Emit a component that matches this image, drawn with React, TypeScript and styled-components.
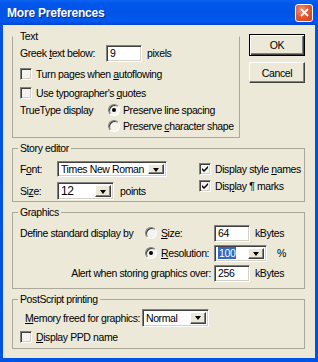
import styled, { createGlobalStyle } from "styled-components";

const GlobalStyle = createGlobalStyle`
  html, body {
    margin: 0;
    padding: 0;
    background: #ffffff;
  }
  body {
    font-family: "Liberation Sans", Arial, sans-serif;
    font-size: 10.5px;
    letter-spacing: -0.4px;
    color: #000000;
  }
`;

const Window = styled.div`
  width: 318px;
  height: 362px;
  display: flex;
  flex-direction: column;
  background: #0054e3;
  box-sizing: border-box;
`;

const TitleBar = styled.div`
  height: 25px;
  flex: none;
  display: flex;
  align-items: center;
  justify-content: space-between;
  padding: 0 5px 0 7px;
  box-sizing: border-box;
  background: linear-gradient(
    #0a62f0 0%,
    #0256ec 15%,
    #0055e5 50%,
    #0058ee 85%,
    #0046d0 100%
  );
`;

const Title = styled.span`
  color: #ffffff;
  font-weight: bold;
  font-size: 12px;
  letter-spacing: -0.2px;
  text-shadow: 1px 1px #0a2a8a;
`;

const CloseButton = styled.div`
  width: 18px;
  height: 18px;
  box-sizing: border-box;
  border: 1px solid #ffffff;
  border-radius: 3px;
  background: radial-gradient(circle at 35% 30%, #f3937a 0%, #e35a33 45%, #c9401b 100%);
  display: flex;
  align-items: center;
  justify-content: center;
`;

const Body = styled.div`
  flex: 1;
  margin: 0 3px 4px 3px;
  padding: 5px 10px 0 9px;
  background: #ece9d8;
  display: flex;
  flex-direction: column;
  gap: 4px;
`;

const TopSection = styled.div`
  display: flex;
  align-items: flex-start;
  gap: 9px;
`;

const Group = styled.fieldset<{ $width?: number; $openTop?: boolean }>`
  margin: 0;
  padding: 0 6px 0 7px;
  border: 1px solid #aca899;
  border-top-color: ${({ $openTop }) => ($openTop ? "transparent" : "#aca899")};
  min-width: 0;
  width: ${({ $width }) => ($width ? `${$width}px` : "auto")};
  box-sizing: border-box;
`;

const Legend = styled.legend`
  padding: 0 2px;
  margin-left: -2px;
  line-height: 12px;
`;

const Row = styled.div<{ $h: number; $indent?: number; $top?: number }>`
  height: ${({ $h }) => $h}px;
  display: flex;
  align-items: center;
  padding-left: ${({ $indent }) => $indent ?? 0}px;
  margin-top: ${({ $top }) => $top ?? 0}px;
  white-space: nowrap;
`;

const Text = styled.span`
  white-space: pre;
`;

const Label = styled.span<{ $w?: number }>`
  display: inline-block;
  width: ${({ $w }) => ($w ? `${$w}px` : "auto")};
  flex: none;
  white-space: pre;
`;

const U = styled.span`
  text-decoration: underline;
`;

const TextBox = styled.div<{ $w: number }>`
  width: ${({ $w }) => $w}px;
  height: 17px;
  box-sizing: border-box;
  border: 1px solid;
  border-color: #808080 #ffffff #ffffff #808080;
  box-shadow: inset 1px 1px #404040, inset -1px -1px #d4d0c8;
  background: #ffffff;
  display: flex;
  align-items: center;
  padding-left: 3px;
  flex: none;
`;

const Unit = styled.span<{ $gap: number }>`
  margin-left: ${({ $gap }) => $gap}px;
  white-space: pre;
`;

const Combo = styled.div<{ $w: number; $h?: number }>`
  width: ${({ $w }) => $w}px;
  height: ${({ $h }) => $h ?? 17}px;
  box-sizing: border-box;
  border: 1px solid;
  border-color: #808080 #ffffff #ffffff #808080;
  box-shadow: inset 1px 1px #404040, inset -1px -1px #d4d0c8;
  background: #ffffff;
  display: flex;
  align-items: stretch;
  padding: 2px;
  flex: none;
`;

const ComboText = styled.span<{ $big?: boolean }>`
  flex: 1;
  display: flex;
  align-items: center;
  padding-left: 1px;
  white-space: pre;
  font-size: ${({ $big }) => ($big ? "12px" : "10.5px")};
`;

const Highlight = styled.span`
  background: #316ac5;
  color: #ffffff;
  padding: 0 1px;
  line-height: 12px;
`;

const DropButton = styled.div`
  width: 16px;
  flex: none;
  box-sizing: border-box;
  background: #ece9d8;
  border: 1px solid;
  border-color: #ffffff #404040 #404040 #ffffff;
  box-shadow: inset -1px -1px #808080;
  display: flex;
  align-items: center;
  justify-content: center;
`;

const Arrow = styled.span`
  width: 0;
  height: 0;
  border-left: 3.5px solid transparent;
  border-right: 3.5px solid transparent;
  border-top: 4px solid #000000;
  margin-top: 1px;
`;

const Box = styled.span`
  width: 12px;
  height: 12px;
  flex: none;
  box-sizing: border-box;
  border: 1px solid;
  border-color: #808080 #ffffff #ffffff #808080;
  box-shadow: inset 1px 1px #404040, inset -1px -1px #d4d0c8;
  background: #f4f3ee;
  display: flex;
  align-items: center;
  justify-content: center;
  margin-right: 4px;
`;

const Radio = styled.span<{ $checked?: boolean; $gap?: number }>`
  width: 12px;
  height: 12px;
  flex: none;
  box-sizing: border-box;
  border-radius: 50%;
  border: 1px solid;
  border-color: #808080 #ffffff #ffffff #808080;
  box-shadow: inset 1px 1px #404040;
  background: #f4f3ee;
  display: flex;
  align-items: center;
  justify-content: center;
  margin-right: ${({ $gap }) => $gap ?? 4}px;
  &::after {
    content: "";
    width: 4px;
    height: 4px;
    border-radius: 50%;
    background: ${({ $checked }) => ($checked ? "#000000" : "transparent")};
  }
`;

const ButtonColumn = styled.div`
  display: flex;
  flex-direction: column;
  gap: 6px;
  padding-top: 4px;
`;

const Button = styled.div<{ $default?: boolean }>`
  width: 56px;
  height: ${({ $default }) => ($default ? 22 : 21)}px;
  box-sizing: border-box;
  display: flex;
  align-items: center;
  justify-content: center;
  background: #ece9d8;
  border: 1px solid;
  border-color: ${({ $default }) =>
    $default ? "#000000" : "#ffffff #404040 #404040 #ffffff"};
  box-shadow: ${({ $default }) =>
    $default
      ? "inset 1px 1px #ffffff, inset -1px -1px #404040, inset -2px -2px #808080"
      : "inset -1px -1px #808080"};
`;

const StoryGrid = styled.div`
  display: grid;
  grid-template-columns: 179px auto;
  padding-bottom: 1px;
`;

const Column = styled.div<{ $top: number }>`
  display: flex;
  flex-direction: column;
  padding-top: ${({ $top }) => $top}px;
`;

const GraphicsGrid = styled.div`
  display: grid;
  grid-template-columns: 125px 16px 53px auto;
  grid-template-rows: 18px 18px 18px;
  row-gap: 2px;
  align-items: center;
  margin-top: 6px;
  padding-bottom: 6px;
  white-space: pre;
`;

const Cell = styled.div<{ $span?: string; $end?: boolean }>`
  display: flex;
  align-items: center;
  grid-column: ${({ $span }) => $span ?? "auto"};
  justify-content: ${({ $end }) => ($end ? "flex-end" : "flex-start")};
  padding-right: ${({ $end }) => ($end ? "3px" : "0")};
`;

const Check = () => (
  <svg width="8" height="8" viewBox="0 0 8 8">
    <path d="M1 3 L3 5 L7 1 L7 3 L3 7 L1 5 Z" fill="#000" />
  </svg>
);

const Drop = () => (
  <DropButton>
    <Arrow />
  </DropButton>
);

export default function App() {
  return (
    <>
      <GlobalStyle />
      <Window>
        <TitleBar>
          <Title>More Preferences</Title>
          <CloseButton>
            <svg width="9" height="9" viewBox="0 0 9 9">
              <path d="M1 1 L8 8 M8 1 L1 8" stroke="#fff" strokeWidth="1.8" />
            </svg>
          </CloseButton>
        </TitleBar>
        <Body>
          <TopSection>
            <Group $width={228} $openTop>
              <Legend>Text</Legend>
              <Row $h={18} $top={2}>
                <Label $w={86}>
                  Greek <U>t</U>ext below:
                </Label>
                <TextBox $w={36}>9</TextBox>
                <Unit $gap={5}>pixels</Unit>
              </Row>
              <Row $h={20} $top={2}>
                <Box />
                <Text>
                  Turn pages when <U>a</U>utoflowing
                </Text>
              </Row>
              <Row $h={17}>
                <Box />
                <Text>
                  Use typographer's <U>q</U>uotes
                </Text>
              </Row>
              <Row $h={17}>
                <Label $w={88}>TrueType display</Label>
                <Radio $checked $gap={3} />
                <Text>Preserve line spacing</Text>
              </Row>
              <Row $h={16} $indent={88}>
                <Radio $gap={3} />
                <Text>
                  Preserve <U>c</U>haracter shape
                </Text>
              </Row>
              <Row $h={3} />
            </Group>
            <ButtonColumn>
              <Button $default>OK</Button>
              <Button>Cancel</Button>
            </ButtonColumn>
          </TopSection>

          <Group>
            <Legend>Story editor</Legend>
            <StoryGrid>
              <Column $top={6}>
                <Row $h={18}>
                  <Label $w={37}>
                    F<U>o</U>nt:
                  </Label>
                  <Combo $w={110} $h={16}>
                    <ComboText>Times New Roman</ComboText>
                    <Drop />
                  </Combo>
                </Row>
                <Row $h={18} $top={4}>
                  <Label $w={37}>
                    Si<U>z</U>e:
                  </Label>
                  <Combo $w={57} $h={18}>
                    <ComboText $big>12</ComboText>
                    <Drop />
                  </Combo>
                  <Unit $gap={6}>points</Unit>
                </Row>
              </Column>
              <Column $top={6}>
                <Row $h={17}>
                  <Box>
                    <Check />
                  </Box>
                  <Text>
                    Display style <U>n</U>ames
                  </Text>
                </Row>
                <Row $h={17}>
                  <Box>
                    <Check />
                  </Box>
                  <Text>
                    Dis<U>p</U>lay ¶ marks
                  </Text>
                </Row>
              </Column>
            </StoryGrid>
          </Group>

          <Group>
            <Legend>Graphics</Legend>
            <GraphicsGrid>
              <Cell>Define standard display by</Cell>
              <Cell>
                <Radio />
              </Cell>
              <Cell>
                <Text>
                  <U>S</U>ize:
                </Text>
              </Cell>
              <Cell>
                <TextBox $w={36}>64</TextBox>
                <Unit $gap={5}>kBytes</Unit>
              </Cell>

              <Cell $span="2">
                <Radio $checked />
              </Cell>
              <Cell>
                <Text>
                  <U>R</U>esolution:
                </Text>
              </Cell>
              <Cell>
                <Combo $w={53}>
                  <ComboText>
                    <Highlight>100</Highlight>
                  </ComboText>
                  <Drop />
                </Combo>
                <Unit $gap={10}>%</Unit>
              </Cell>

              <Cell $span="1 / 4" $end>
                Alert when storing graphics over:
              </Cell>
              <Cell>
                <TextBox $w={36}>256</TextBox>
                <Unit $gap={5}>kBytes</Unit>
              </Cell>
            </GraphicsGrid>
          </Group>

          <Group>
            <Legend>PostScript printing</Legend>
            <Row $h={19} $top={3} $indent={5}>
              <Label $w={117}>
                <U>M</U>emory freed for graphics:
              </Label>
              <Combo $w={67} $h={18}>
                <ComboText>Normal</ComboText>
                <Drop />
              </Combo>
            </Row>
            <Row $h={16} $top={2}>
              <Box />
              <Text>
                <U>D</U>isplay PPD name
              </Text>
            </Row>
            <Row $h={3} />
          </Group>
        </Body>
      </Window>
    </>
  );
}
